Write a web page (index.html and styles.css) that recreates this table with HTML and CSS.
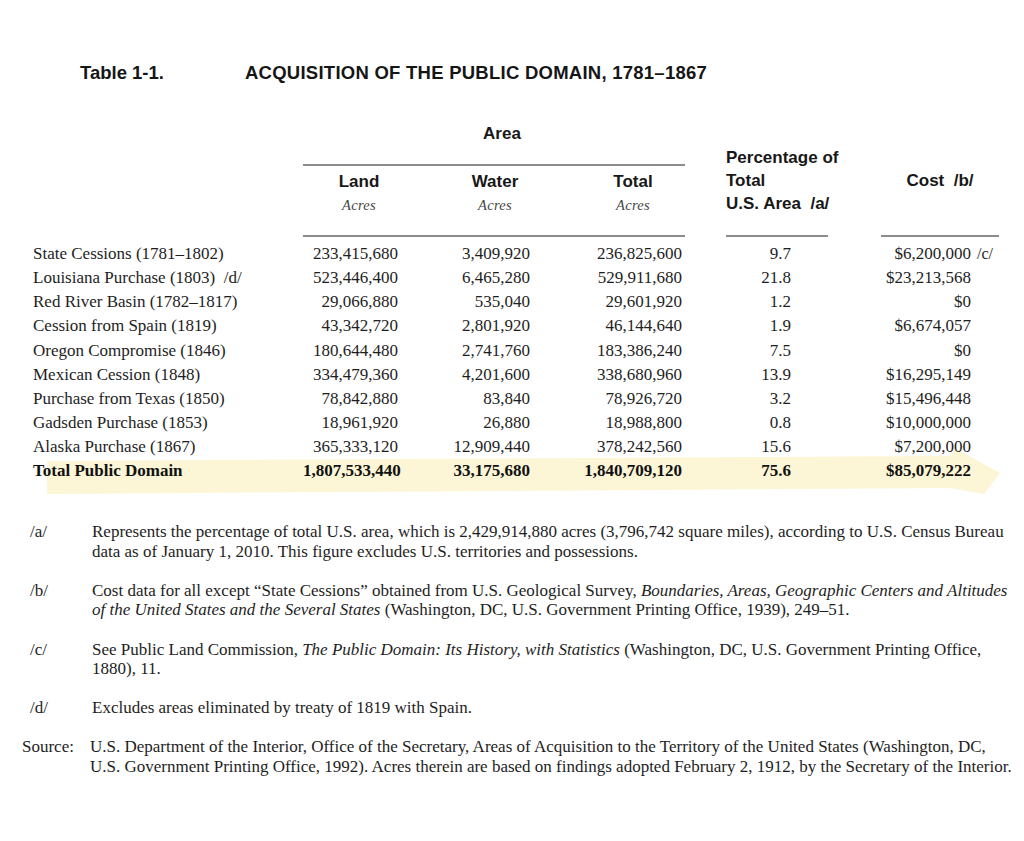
FILE: index.html
```html
<!DOCTYPE html>
<html lang="en">
<head>
<meta charset="utf-8">
<title>Table 1-1. Acquisition of the Public Domain, 1781–1867</title>
<link rel="stylesheet" href="styles.css">
</head>
<body>
<div class="page">
  <header class="title-row">
    <span class="tnum">Table 1-1.</span>
    <h1 class="ttl">ACQUISITION OF THE PUBLIC DOMAIN, 1781–1867</h1>
  </header>

  <div class="table">
    <div class="hl"></div>
    <div class="thead">
      <div class="h-area">Area</div>
      <div class="h-col c-land"><div class="h">Land</div><div class="u">Acres</div></div>
      <div class="h-col c-water"><div class="h">Water</div><div class="u">Acres</div></div>
      <div class="h-col c-total"><div class="h">Total</div><div class="u">Acres</div></div>
      <div class="h-pct">Percentage of<br>Total<br>U.S. Area&nbsp; /a/</div>
      <div class="h-cost">Cost&nbsp; /b/</div>
    </div>

    <div class="tbody">
      <div class="row"><div class="lbl">State Cessions (1781–1802)</div><div class="n land">233,415,680</div><div class="n water">3,409,920</div><div class="n total">236,825,600</div><div class="n pct">9.7</div><div class="n cost">$6,200,000<span class="fn"><span>/c/</span></span></div></div>
      <div class="row"><div class="lbl">Louisiana Purchase (1803) &nbsp;/d/</div><div class="n land">523,446,400</div><div class="n water">6,465,280</div><div class="n total">529,911,680</div><div class="n pct">21.8</div><div class="n cost">$23,213,568</div></div>
      <div class="row"><div class="lbl">Red River Basin (1782–1817)</div><div class="n land">29,066,880</div><div class="n water">535,040</div><div class="n total">29,601,920</div><div class="n pct">1.2</div><div class="n cost">$0</div></div>
      <div class="row"><div class="lbl">Cession from Spain (1819)</div><div class="n land">43,342,720</div><div class="n water">2,801,920</div><div class="n total">46,144,640</div><div class="n pct">1.9</div><div class="n cost">$6,674,057</div></div>
      <div class="row"><div class="lbl">Oregon Compromise (1846)</div><div class="n land">180,644,480</div><div class="n water">2,741,760</div><div class="n total">183,386,240</div><div class="n pct">7.5</div><div class="n cost">$0</div></div>
      <div class="row"><div class="lbl">Mexican Cession (1848)</div><div class="n land">334,479,360</div><div class="n water">4,201,600</div><div class="n total">338,680,960</div><div class="n pct">13.9</div><div class="n cost">$16,295,149</div></div>
      <div class="row"><div class="lbl">Purchase from Texas (1850)</div><div class="n land">78,842,880</div><div class="n water">83,840</div><div class="n total">78,926,720</div><div class="n pct">3.2</div><div class="n cost">$15,496,448</div></div>
      <div class="row"><div class="lbl">Gadsden Purchase (1853)</div><div class="n land">18,961,920</div><div class="n water">26,880</div><div class="n total">18,988,800</div><div class="n pct">0.8</div><div class="n cost">$10,000,000</div></div>
      <div class="row"><div class="lbl">Alaska Purchase (1867)</div><div class="n land">365,333,120</div><div class="n water">12,909,440</div><div class="n total">378,242,560</div><div class="n pct">15.6</div><div class="n cost">$7,200,000</div></div>
      <div class="row tot"><div class="lbl">Total Public Domain</div><div class="n land">1,807,533,440</div><div class="n water">33,175,680</div><div class="n total">1,840,709,120</div><div class="n pct">75.6</div><div class="n cost">$85,079,222</div></div>
    </div>
  </div>

  <div class="notes">
    <div class="note"><div class="nl">/a/</div><div class="nt">Represents the percentage of total U.S. area, which is 2,429,914,880 acres (3,796,742 square miles), according to U.S. Census Bureau<br>data as of January 1, 2010. This figure excludes U.S. territories and possessions.</div></div>
    <div class="note"><div class="nl">/b/</div><div class="nt">Cost data for all except “State Cessions” obtained from U.S. Geological Survey, <i>Boundaries, Areas, Geographic Centers and Altitudes</i><br><i>of the United States and the Several States</i> (Washington, DC, U.S. Government Printing Office, 1939), 249–51.</div></div>
    <div class="note"><div class="nl">/c/</div><div class="nt">See Public Land Commission, <i>The Public Domain: Its History, with Statistics</i> (Washington, DC, U.S. Government Printing Office,<br>1880), 11.</div></div>
    <div class="note"><div class="nl">/d/</div><div class="nt">Excludes areas eliminated by treaty of 1819 with Spain.</div></div>
    <div class="note src"><div class="nl">Source:</div><div class="nt">U.S. Department of the Interior, Office of the Secretary, Areas of Acquisition to the Territory of the United States (Washington, DC,<br>U.S. Government Printing Office, 1992). Acres therein are based on findings adopted February 2, 1912, by the Secretary of the Interior.</div></div>
  </div>
</div>
</body>
</html>
```

FILE: styles.css
```css
* { box-sizing: border-box; }
html, body { margin: 0; padding: 0; background: #ffffff; }
body {
  font-family: "Liberation Serif", "Times New Roman", serif;
  color: #1e1e1e;
  width: 1024px;
}
.page { padding-top: 62px; }

/* Title */
.title-row {
  display: flex;
  align-items: center;
  padding-left: 80px;
  height: 22px;
  font-family: "Liberation Sans", Arial, sans-serif;
  font-weight: bold;
  font-size: 18.5px;
  line-height: 22px;
  color: #161616;
}
.tnum { width: 165px; flex: none; }
.ttl { margin: 0; font-size: inherit; font-weight: bold; letter-spacing: 0.25px; }

/* Table */
.table {
  position: relative;
  margin-top: 39px;
  padding-left: 33px;
}
.hl {
  position: absolute;
  left: 47px;
  top: 325px;
  width: 953px;
  height: 46px;
  background: #fcf6d6;
  clip-path: polygon(0 13px, 903px 8px, 908px 0, 953px 25px, 937px 46px, 903px 40px, 0 46px);
}
.thead, .row {
  display: grid;
  grid-template-columns: 270px 112px 150px 120px 41px 102px 53px 118px;
}
.thead {
  font-family: "Liberation Sans", Arial, sans-serif;
  font-weight: bold;
  font-size: 17px;
  color: #181818;
}
.h-area {
  grid-column: 2 / 5;
  grid-row: 1;
  text-align: center;
  padding-left: 16px;
  line-height: 22px;
  padding-bottom: 19px;
  border-bottom: 2px solid #8c8c8c;
}
.h-col {
  grid-row: 2;
  text-align: center;
  padding-top: 5px;
  padding-bottom: 18px;
  border-bottom: 2px solid #8c8c8c;
}
.c-land { grid-column: 2; }
.c-water { grid-column: 3; padding-left: 10px; }
.c-total { grid-column: 4; padding-left: 16px; }
.h-col .h { line-height: 22px; }
.h-col .u {
  font-family: "Liberation Serif", "Times New Roman", serif;
  font-style: italic;
  font-weight: normal;
  font-size: 14.5px;
  letter-spacing: 0.3px;
  line-height: 24px;
  color: #444;
}
.h-pct {
  grid-column: 6;
  grid-row: 1 / 3;
  align-self: end;
  line-height: 23px;
  padding-bottom: 20px;
  border-bottom: 2px solid #8c8c8c;
  white-space: nowrap;
}
.h-cost {
  grid-column: 8;
  grid-row: 1 / 3;
  align-self: end;
  text-align: center;
  line-height: 23px;
  padding-bottom: 43px;
  border-bottom: 2px solid #8c8c8c;
  white-space: nowrap;
}

.tbody {
  position: relative;
  margin-top: 5px;
}
.row {
  height: 24.15px;
  line-height: 24.15px;
  font-size: 17px;
  white-space: nowrap;
}
.row .lbl { grid-column: 1; }
.n { text-align: right; }
.n.land { grid-column: 2; padding-right: 17px; }
.n.water { grid-column: 3; padding-right: 35px; }
.n.total { grid-column: 4; padding-right: 3px; }
.n.pct { grid-column: 6; padding-right: 37px; }
.n.cost { grid-column: 8; padding-right: 28px; }
.fn { display: inline-block; width: 0; text-align: left; }
.fn span { display: inline-block; padding-left: 6px; font-size: 16px; }
.row.tot { font-weight: bold; color: #111; }

/* Notes */
.notes {
  margin-top: 39px;
  padding-left: 22px;
  display: flex;
  flex-direction: column;
  gap: 20px;
  font-size: 17px;
  line-height: 19.3px;
  color: #1e1e1e;
}
.note { display: flex; }
.nl { width: 70px; flex: none; padding-left: 8px; }
.nt { white-space: nowrap; }
.note.src .nl { padding-left: 0; width: 68px; }
```
